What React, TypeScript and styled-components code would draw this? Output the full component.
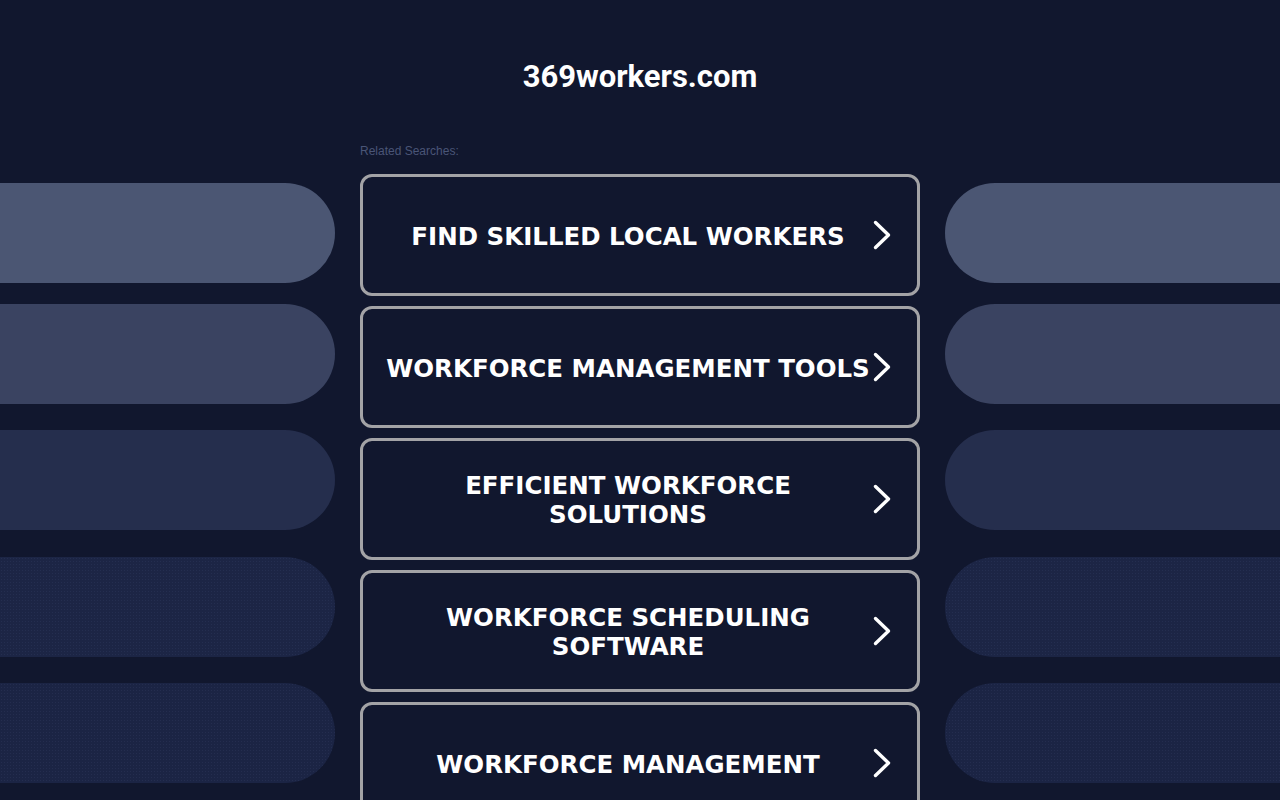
import React from "react";
import styled, { createGlobalStyle } from "styled-components";

const DOMAIN = "369workers.com";
const RELATED_TEXT = "Related Searches:";

const LINKS = [
  "FIND SKILLED LOCAL WORKERS",
  "WORKFORCE MANAGEMENT TOOLS",
  "EFFICIENT WORKFORCE SOLUTIONS",
  "WORKFORCE SCHEDULING SOFTWARE",
  "WORKFORCE MANAGEMENT",
];

// decorative pills on both sides, lightest on top
const PILLS = [
  { color: "#4b5673", top: 0, dotted: false },
  { color: "#3a4361", top: 21, dotted: false },
  { color: "#252e4d", top: 26, dotted: false },
  { color: "#1c2545", top: 27, dotted: true },
  { color: "#1b2444", top: 26, dotted: true },
];

const GlobalStyle = createGlobalStyle`
  html, body {
    margin: 0;
    padding: 0;
    background-color: #11172e;
    overflow: hidden;
  }
  * {
    box-sizing: border-box;
  }
`;

const Chevron = () => (
  <svg width="20" height="30" viewBox="0 0 20 30" fill="none">
    <path
      d="M3.5 2.5 L16.5 15 L3.5 27.5"
      stroke="#ffffff"
      strokeWidth="3.4"
      strokeLinecap="round"
      strokeLinejoin="round"
    />
  </svg>
);

const App: React.FC = () => {
  return (
    <Page>
      <GlobalStyle />
      <Header>
        <Title>{DOMAIN}</Title>
      </Header>
      <Layout>
        <PillColumn side="left">
          {PILLS.map((p, i) => (
            <Pill key={i} side="left" color={p.color} top={p.top} dotted={p.dotted} />
          ))}
        </PillColumn>
        <Center>
          <Related>{RELATED_TEXT}</Related>
          <LinkList>
            {LINKS.map((label) => (
              <LinkButton key={label} href="#">
                <LinkText>{label}</LinkText>
                <ChevronBox>
                  <Chevron />
                </ChevronBox>
              </LinkButton>
            ))}
          </LinkList>
        </Center>
        <PillColumn side="right">
          {PILLS.map((p, i) => (
            <Pill key={i} side="right" color={p.color} top={p.top} dotted={p.dotted} />
          ))}
        </PillColumn>
      </Layout>
    </Page>
  );
};

export default App;

const Page = styled.div`
  width: 1280px;
  height: 800px;
  overflow: hidden;
  background-color: #11172e;
`;

const Header = styled.header`
  display: flex;
  justify-content: center;
  padding-top: 60px;
  height: 140px;
`;

const Title = styled.h1`
  margin: 0;
  font-family: Roboto, "Liberation Sans", Arial, sans-serif;
  font-weight: 700;
  font-size: 31px;
  line-height: 34px;
  color: #ffffff;
`;

const Layout = styled.div`
  display: grid;
  grid-template-columns: 335px 560px 335px;
  column-gap: 25px;
`;

const PillColumn = styled.div<{ side: "left" | "right" }>`
  display: flex;
  flex-direction: column;
  padding-top: 43px;
  align-items: ${(p) => (p.side === "left" ? "flex-end" : "flex-start")};
`;

const Pill = styled.div<{ side: "left" | "right"; color: string; top: number; dotted: boolean }>`
  width: 100%;
  height: 100px;
  flex-shrink: 0;
  margin-top: ${(p) => p.top}px;
  background-color: ${(p) => p.color};
  border-radius: ${(p) => (p.side === "left" ? "0 50px 50px 0" : "50px 0 0 50px")};
  background-image: ${(p) =>
    p.dotted
      ? "radial-gradient(rgba(52, 64, 100, 0.35) 0.5px, transparent 0.7px)"
      : "none"};
  background-size: 3px 3px;
`;

const Center = styled.main`
  display: flex;
  flex-direction: column;
`;

const Related = styled.div`
  font-family: "Liberation Sans", Arial, sans-serif;
  font-size: 12px;
  line-height: 20px;
  padding-top: 1px;
  color: #4a5577;
  margin-bottom: 13px;
`;

const LinkList = styled.div`
  display: flex;
  flex-direction: column;
  gap: 10px;
`;

const LinkButton = styled.a`
  display: flex;
  align-items: center;
  height: 122px;
  padding: 0 25px 0 22px;
  border: 3px solid #a3a3a6;
  border-radius: 12px;
  background-color: #11172e;
  text-decoration: none;
`;

const LinkText = styled.span`
  flex: 1;
  text-align: center;
  font-family: "DejaVu Sans", Verdana, sans-serif;
  font-weight: 700;
  font-size: 24.5px;
  line-height: 29px;
  padding-top: 2px;
  color: #ffffff;
`;

const ChevronBox = styled.span`
  display: flex;
  align-items: center;
  justify-content: center;
  flex-shrink: 0;
  width: 20px;
  margin-left: 1px;
`;
